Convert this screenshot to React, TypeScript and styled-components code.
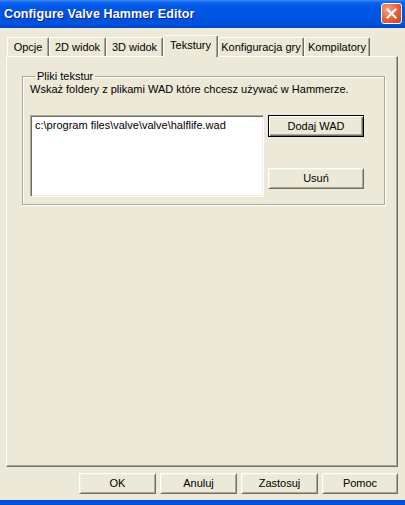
import { createGlobalStyle, styled } from 'styled-components';

const uiFont = `"Liberation Sans", Arial, sans-serif`;

const Global = createGlobalStyle`
  html, body { margin: 0; padding: 0; background: #ece9d8; }
  * { box-sizing: border-box; }
`;

const Window = styled.div`
  width: 405px;
  height: 505px;
  display: flex;
  flex-direction: column;
  font-family: ${uiFont};
  font-size: 11px;
  color: #000;
  overflow: hidden;
`;

const TitleBar = styled.div`
  height: 28px;
  flex: none;
  display: flex;
  align-items: center;
  justify-content: space-between;
  padding: 0 3px 1px 4px;
  background: linear-gradient(#3d8ef8 0, #1467ef 2px, #0058e6 6px, #0055e4 50%, #0052dc 85%, #0046c6 100%);
`;

const Title = styled.span`
  font-family: "Liberation Sans", Arial, sans-serif;
  font-weight: bold;
  font-size: 12.5px;
  color: #fff;
  text-shadow: 1px 1px 0 #0a1e8c;
  letter-spacing: 0.1px;
`;

const CloseBtn = styled.div`
  width: 21px;
  height: 21px;
  border: 1px solid #fff;
  border-radius: 3px;
  background: radial-gradient(circle at 30% 30%, #f3a487 0, #e35f38 55%, #c9451d 100%);
  display: flex;
  align-items: center;
  justify-content: center;
`;

const Body = styled.div`
  flex: 1;
  display: flex;
  flex-direction: column;
  background: #ece9d8;
  padding: 7px 7px 6px 6px;
`;

const TabStrip = styled.div`
  display: flex;
  height: 21px;
  padding-left: 1px;
  align-items: flex-end;
`;

const Tab = styled.div<{ $w: number; $active?: boolean }>`
  width: ${p => p.$w}px;
  height: ${p => (p.$active ? 22 : 19)}px;
  margin-bottom: ${p => (p.$active ? -1 : 0)}px;
  position: relative;
  z-index: ${p => (p.$active ? 2 : 1)};
  background: #ece9d8;
  border-left: 1px solid #fff;
  border-top: 1px solid #fff;
  border-right: 1px solid #716f64;
  border-top-left-radius: 2px;
  border-top-right-radius: 2px;
  box-shadow: inset -1px 0 0 #aca899;
  display: flex;
  justify-content: center;
  line-height: 13px;
  padding-top: ${p => (p.$active ? 3 : 3)}px;
  white-space: nowrap;
`;

const Panel = styled.div`
  flex: 1;
  border-left: 1px solid #fff;
  border-top: 1px solid #fff;
  border-right: 1px solid #716f64;
  border-bottom: 1px solid #716f64;
  box-shadow: inset -1px -1px 0 #aca899;
  padding: 13px 12px 0 15px;
`;

const Group = styled.fieldset`
  margin: 0;
  min-width: 0;
  border: 1px solid #aca899;
  box-shadow: inset 1px 1px 0 #fff, 1px 1px 0 #fff;
  border-radius: 0;
  padding: 1px 7px 7px 7px;
`;

const Legend = styled.legend`
  padding: 0 2px;
  margin-left: 5px;
  line-height: 12px;
`;

const Hint = styled.div`
  line-height: 12px;
  white-space: nowrap;
`;

const GroupRow = styled.div`
  display: flex;
  gap: 4px;
  margin-top: 20px;
`;

const ListBox = styled.div`
  width: 234px;
  height: 82px;
  background: #fff;
  border: 1px solid;
  border-color: #aca899 #fff #fff #aca899;
  box-shadow: inset 1px 1px 0 #716f64, inset -1px -1px 0 #f1efe2;
  padding: 3px 4px;
  line-height: 13px;
  white-space: nowrap;
`;

const ButtonCol = styled.div`
  display: flex;
  flex-direction: column;
  justify-content: space-between;
  padding: 0 0 8px 0;
`;

const Button = styled.button<{ $w: number; $default?: boolean }>`
  width: ${p => p.$w}px;
  height: ${p => (p.$default ? 22 : 21)}px;
  font-family: ${uiFont};
  font-size: 11px;
  color: #000;
  background: #ece9d8;
  padding: 0 0 1px 0;
  border: 1px solid;
  border-color: ${p => (p.$default ? '#000' : '#fff #716f64 #716f64 #fff')};
  box-shadow: ${p =>
    p.$default
      ? 'inset 1px 1px 0 #fff, inset -1px -1px 0 #716f64, inset -2px -2px 0 #aca899'
      : 'inset 1px 1px 0 #f1efe2, inset -1px -1px 0 #aca899'};
  border-radius: 0;
  cursor: default;
`;

const ButtonRow = styled.div`
  display: flex;
  justify-content: flex-end;
  gap: 4px;
  margin-top: 6px;
`;

const BottomEdge = styled.div`
  height: 5px;
  flex: none;
  background: linear-gradient(#0a3ec8 0, #0850e0 1px, #0055e5 3px, #0048d0 100%);
`;

const tabs = [
  { label: 'Opcje', w: 42 },
  { label: '2D widok', w: 57 },
  { label: '3D widok', w: 57 },
  { label: 'Tekstury', w: 55, active: true },
  { label: 'Konfiguracja gry', w: 86 },
  { label: 'Kompilatory', w: 66 },
];

export default function App() {
  return (
    <Window>
      <Global />
      <TitleBar>
        <Title>Configure Valve Hammer Editor</Title>
        <CloseBtn>
          <svg width="11" height="11" viewBox="0 0 11 11">
            <path d="M1.5 1.5 L9.5 9.5 M9.5 1.5 L1.5 9.5" stroke="#fff" strokeWidth="2" strokeLinecap="square" />
          </svg>
        </CloseBtn>
      </TitleBar>
      <Body>
        <TabStrip>
          {tabs.map(t => (
            <Tab key={t.label} $w={t.w} $active={t.active}>
              {t.label}
            </Tab>
          ))}
        </TabStrip>
        <Panel>
          <Group>
            <Legend>Pliki tekstur</Legend>
            <Hint>Wskaż foldery z plikami WAD które chcesz używać w Hammerze.</Hint>
            <GroupRow>
              <ListBox>c:\program files\valve\valve\halflife.wad</ListBox>
              <ButtonCol>
                <Button $w={96} $default>Dodaj WAD</Button>
                <Button $w={96}>Usuń</Button>
              </ButtonCol>
            </GroupRow>
          </Group>
        </Panel>
        <ButtonRow>
          <Button $w={77}>OK</Button>
          <Button $w={77}>Anuluj</Button>
          <Button $w={77}>Zastosuj</Button>
          <Button $w={76}>Pomoc</Button>
        </ButtonRow>
      </Body>
      <BottomEdge />
    </Window>
  );
}
